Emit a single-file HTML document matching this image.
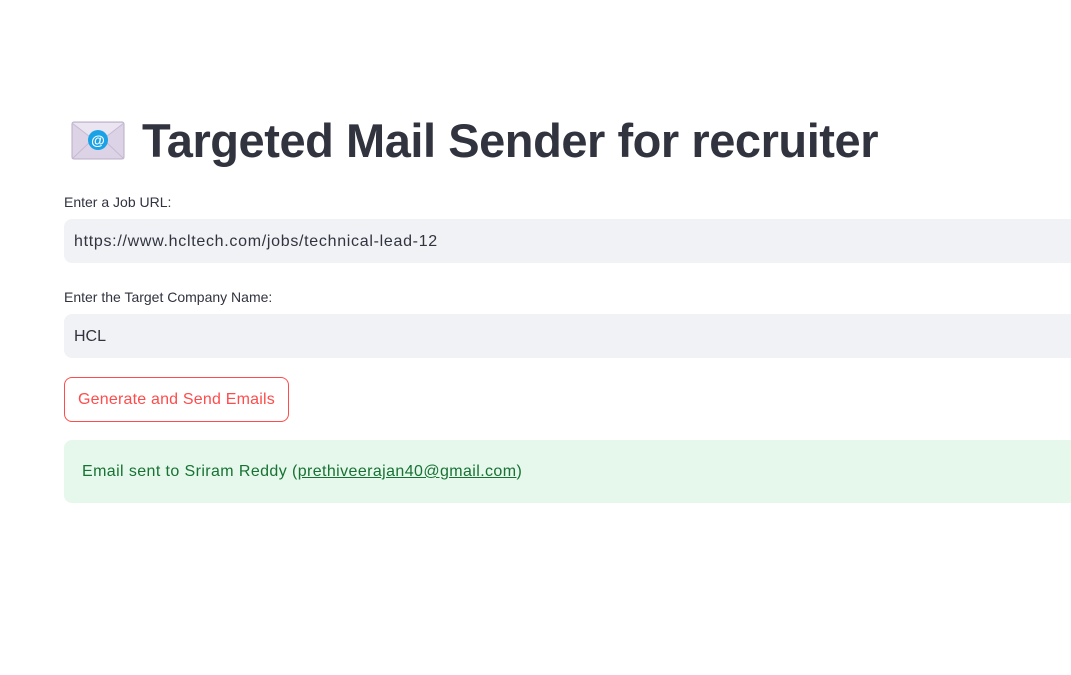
<!DOCTYPE html>
<html><head><style>
body{margin:0;width:1071px;height:675px;background:#fff;overflow:hidden;font-family:"Liberation Sans",sans-serif;color:#31333f;position:relative}
.h1{position:absolute;left:142px;top:113px;font-size:47px;font-weight:bold;letter-spacing:-0.45px;color:#31333f}
.lbl{position:absolute;left:64px;font-size:14px;color:#31333f}
.inp{position:absolute;left:64px;width:1020px;height:44px;background:#f0f2f6;border-radius:8px;font-size:16px;line-height:46px;padding-left:10px;box-sizing:border-box}
.btn{position:absolute;left:64px;top:377px;width:225px;height:45px;border:1px solid #ff4b4b;border-radius:8px;box-sizing:border-box;color:#ff4b4b;font-size:16px;line-height:43px;text-align:center;letter-spacing:0.2px}
.ok{position:absolute;left:64px;top:440px;width:1020px;height:63px;background:#e6f7ec;border-radius:8px;color:#177233;font-size:16px;line-height:64px;padding-left:18px;box-sizing:border-box;letter-spacing:0.4px}
.ok u{color:#177233}
</style></head><body>
<svg style="position:absolute;left:71px;top:121px" width="54" height="39" viewBox="0 0 54 39">
<rect x="1" y="1" width="52" height="37" rx="2" fill="#ddd3e6" stroke="#b9aec6"/>
<path d="M1 2 L27 22 L53 2" fill="#ebe4f1" stroke="#c6bbd2"/>
<path d="M1 38 L20 20 M53 38 L34 20" stroke="#c6bbd2" fill="none"/>
<circle cx="27" cy="19" r="10" fill="#1aa2e6"/>
<text x="27" y="24" font-size="14" text-anchor="middle" fill="#fff" font-family="Liberation Sans" font-weight="bold">@</text>
</svg>
<div class="h1">Targeted Mail Sender for recruiter</div>
<div class="lbl" style="top:194px">Enter a Job URL:</div>
<div class="inp" style="top:219px;letter-spacing:0.7px">https://www.hcltech.com/jobs/technical-lead-12</div>
<div class="lbl" style="top:289px">Enter the Target Company Name:</div>
<div class="inp" style="top:314px">HCL</div>
<div class="btn">Generate and Send Emails</div>
<div class="ok">Email sent to Sriram Reddy (<u>prethiveerajan40@gmail.com</u>)</div>
</body></html>
